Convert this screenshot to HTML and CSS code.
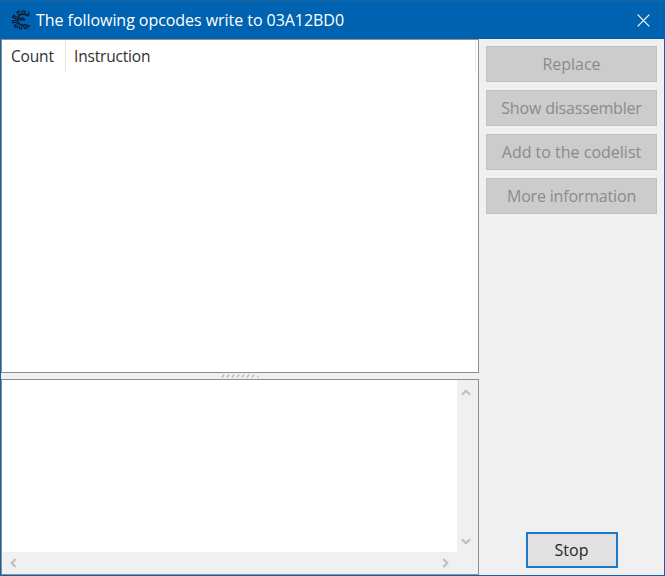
FILE: index.html
```html
<!DOCTYPE html>
<html lang="en">
<head>
<meta charset="utf-8">
<title>The following opcodes write to 03A12BD0</title>
<link rel="stylesheet" href="styles.css">
</head>
<body>
<div class="window">
  <header class="titlebar">
    <svg class="logo" width="20" height="20" viewBox="0 0 20 20" fill="none" stroke="#0b1a2c">
      <path d="M16.500 5.200C12 3 7 4.500 6.200 9.600C5.900 13.500 10 16.300 15.500 14.600" stroke-width="1.500"/>
      <path d="M17.800 1.500v4.200l-2.500-.3M6.500 9.800h7.500M8 8.300l3.500-.2 3 1.700" stroke-width="1.200"/>
      <path d="M7.500 4.600L5.800 2.200l2.300-1.100 1 2.700M11 3.600l.2-2.400 3-.1-.3 2.700M5.500 7L2.600 5.200 1.500 7.200l3.300 1.500M5 10.300l-3.600.4.500 2.200 3.500-.8M6 13.500l-2.700 2.200 1.600 1.700 2.500-2.100M8.700 16l-.7 2.700 2.500.3.500-2.800M12.800 16l.7 2.700 2.500-.5-.7-2.800M16.200 14.400l1.200 2.400 1.800-1.400" stroke-width="1.100"/>
    </svg>
    <span class="title">The following opcodes write to 03A12BD0</span>
    <svg class="close" width="13" height="13" viewBox="0 0 13 13" stroke="#fff" stroke-width="1.2"><path d="M.7.7l11.600 11.600M12.300.7L.7 12.300"/></svg>
  </header>
  <main class="body">
    <section class="left">
      <div class="list">
        <div class="columns">
          <div class="col count"><span>Count</span></div>
          <div class="col instruction"><span>Instruction</span></div>
        </div>
      </div>
      <div class="splitter">
        <svg width="38" height="4" viewBox="0 0 38 4" stroke="#bcbcbc" stroke-width="1.4"><path d="M1 3.500l2-3M6 3.500l2-3M11 3.500l2-3M16 3.500l2-3M21 3.500l2-3M26 3.500l2-3M31 3.500l2-3M36 2.500h1.500"/></svg>
      </div>
      <div class="memo">
        <div class="text"></div>
        <div class="vbar">
          <svg width="10" height="7" viewBox="0 0 10 7"><path d="M1 5.700L5 1.700l4 4"/></svg>
          <svg width="10" height="7" viewBox="0 0 10 7"><path d="M1 1.300l4 4 4-4"/></svg>
        </div>
        <div class="hbar">
          <svg width="7" height="10" viewBox="0 0 7 10"><path d="M5.700 1L1.700 5l4 4"/></svg>
          <svg width="7" height="10" viewBox="0 0 7 10"><path d="M1.300 1l4 4-4 4"/></svg>
        </div>
        <div class="corner"></div>
      </div>
    </section>
    <aside class="side">
      <button class="btn" disabled><span>Replace</span></button>
      <button class="btn tight" disabled><span>Show disassembler</span></button>
      <button class="btn" disabled><span>Add to the codelist</span></button>
      <button class="btn tight" disabled><span>More information</span></button>
      <button class="stop"><span>Stop</span></button>
    </aside>
  </main>
</div>
</body>
</html>
```
FILE: styles.css
```css
* { box-sizing: border-box; }
body { margin: 0; font-family: "Open Sans", "Noto Sans", sans-serif; font-size: 16px; color: #303030; }
svg { display: block; flex: none; fill: none; }
span { white-space: nowrap; }
.window { width: 665px; height: 576px; display: flex; flex-direction: column; background: #f0f0f0; border: 1px solid #0f62a6; border-top: 0; }
.titlebar { height: 39px; margin: 0 -1px; flex: none; display: flex; align-items: center; padding: 0 15px 0 11px; background: #0063b1; border-top: 1px solid #1a6299; color: #fff; }
.title { margin-left: 5px; flex: 1; letter-spacing: -.05px; }
.body { flex: 1; min-height: 0; display: flex; }
.left { width: 478px; display: flex; flex-direction: column; }
.list { height: 334px; background: #fff; border: 1px solid #8c8f94; }
.columns { display: flex; height: 32px; width: 474px; }
.col { border-right: 1px solid #e6e6e6; line-height: 32px; font-size: 15.5px; letter-spacing: -.18px; }
.count { width: 64px; padding-left: 9px; }
.instruction { flex: 1; padding-left: 8px; }
.splitter { height: 6px; display: flex; justify-content: center; padding-top: 1px; }
.memo { flex: 1; display: grid; grid-template-columns: 1fr 21px; grid-template-rows: 1fr 22px; background: #fff; border: 1px solid #8c8f94; }
.vbar, .hbar { display: flex; justify-content: space-between; align-items: center; background: #f0f0f0; }
.vbar { flex-direction: column; padding: 9px 4px 7px 0; }
.hbar { padding: 0 8px; }
.vbar path, .hbar path { stroke: #bfbfbf; stroke-width: 2.2; }
.corner { background: #f0f0f0; }
.side { flex: 1; display: flex; flex-direction: column; gap: 8px; padding: 7px; }
button { font: inherit; padding: 0; display: flex; align-items: center; justify-content: center; }
.btn { height: 36px; padding-bottom: 1px; background: #ccc; border: 1px solid #c2c2c2; color: #8b8b8b; }
.tight { letter-spacing: -.18px; }
.stop { width: 92px; height: 36px; margin: auto auto 0; background: #e1e1e1; border: 2px solid #1979ca; color: #262626; }
```
